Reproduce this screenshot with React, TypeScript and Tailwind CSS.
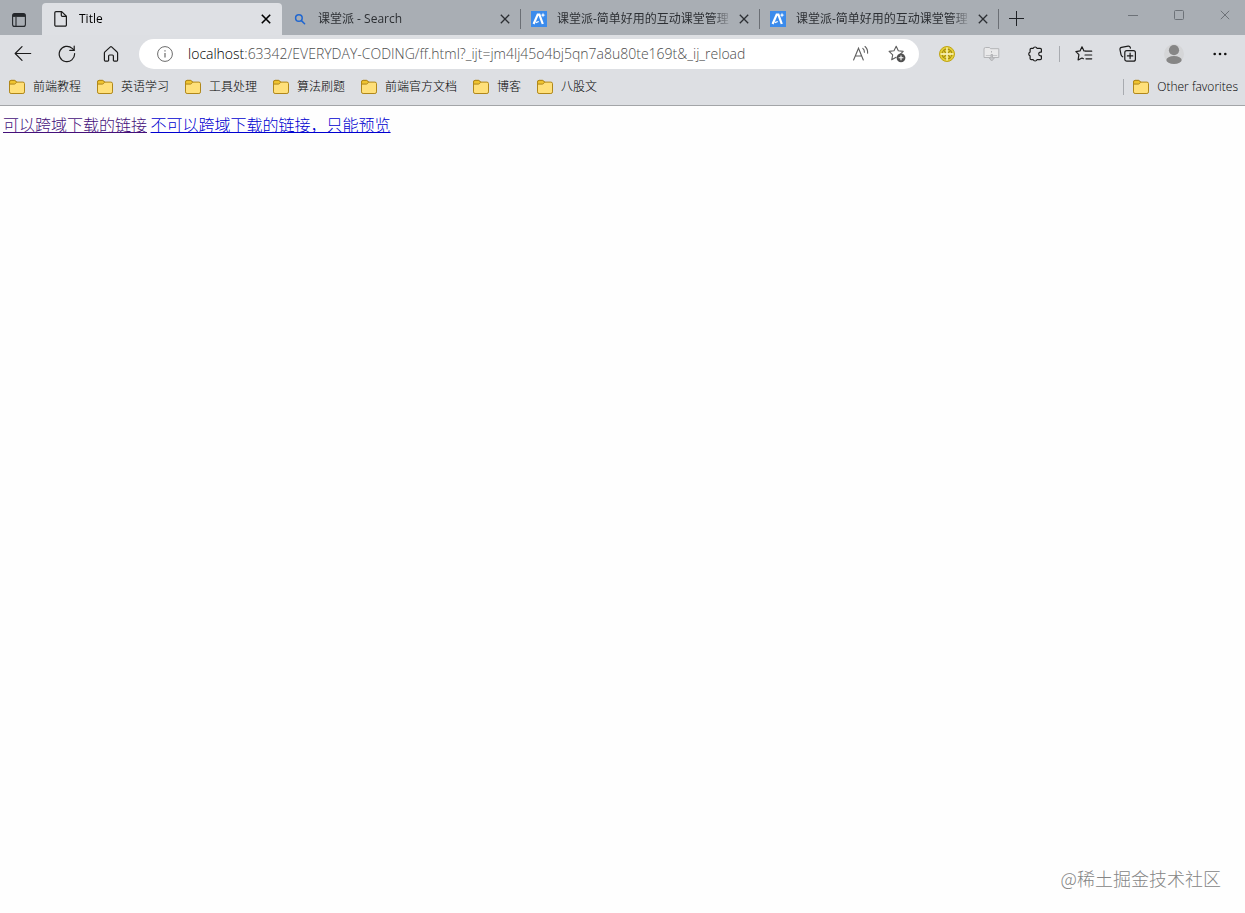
import { useState } from "react";
import type { ReactNode } from "react";
import clsx from "clsx";

type TabIcon = "page" | "search" | "ketangpai";

interface TabInfo {
  id: number;
  title: string;
  icon: TabIcon;
}

const TABS: TabInfo[] = [
  { id: 1, title: "Title", icon: "page" },
  { id: 2, title: "课堂派 - Search", icon: "search" },
  { id: 3, title: "课堂派-简单好用的互动课堂管理", icon: "ketangpai" },
  { id: 4, title: "课堂派-简单好用的互动课堂管理", icon: "ketangpai" },
];

const BOOKMARKS = ["前端教程", "英语学习", "工具处理", "算法刷题", "前端官方文档", "博客", "八股文"];

const URL_PATH = ":63342/EVERYDAY-CODING/ff.html?_ijt=jm4lj45o4bj5qn7a8u80te169t&_ij_reload";

function PageIcon() {
  return (
    <svg width="16" height="16" viewBox="0 0 16 16" fill="none" stroke="#1b1b1b" strokeWidth="1.2" strokeLinejoin="round">
      <path d="M3 .6h5.7l4.7 4.6v8.7a1.2 1.2 0 0 1-1.2 1.2H3a1.2 1.2 0 0 1-1.2-1.2V1.8A1.2 1.2 0 0 1 3 .6z" />
      <path d="M8.3.8v3.5a1.1 1.1 0 0 0 1.1 1.1h3.8" />
    </svg>
  );
}

function SearchIcon() {
  return (
    <svg width="16" height="16" viewBox="0 0 16 16" fill="none" stroke="#1f66d0" strokeWidth="1.5" strokeLinecap="round">
      <circle cx="6.9" cy="7" r="3.3" />
      <path d="M9.4 9.6l3.2 3.2" />
    </svg>
  );
}

function KetangpaiIcon() {
  return (
    <svg width="16" height="16" viewBox="0 0 16 16">
      <rect width="16" height="16" fill="#3b8bec" />
      <path d="M2.6 13L6.7 3.6h1.7L11.8 13" fill="none" stroke="#fff" strokeWidth="2.2" />
      <path d="M4.8 11.6l3-1.1" stroke="#fff" strokeWidth="1.2" />
      <path d="M12 1.6l.7 1.8 1.8.7-1.8.7-.7 1.8-.7-1.8-1.8-.7 1.8-.7z" fill="#fff" />
    </svg>
  );
}

function FolderIcon() {
  return (
    <svg className="shrink-0" width="16" height="16" viewBox="0 0 16 16" stroke="#b0871a" strokeLinejoin="round">
      <path d="M.5 3A1.6 1.6 0 0 1 2.1 1.4h3.3c.5 0 .8.2 1.1.5l1.1 1.2h6.3a1.6 1.6 0 0 1 1.6 1.6v8.2a1.6 1.6 0 0 1-1.6 1.6H2.1a1.6 1.6 0 0 1-1.6-1.6z" fill="#ffe07a" />
      <path d="M.6 5.1h4.8c.4 0 .7-.1 1-.4l1.2-1.5-1.1-1.3a1.4 1.4 0 0 0-1.1-.5H2.1A1.6 1.6 0 0 0 .5 3z" fill="#efc32f" />
    </svg>
  );
}

function CloseIcon({ strokeWidth = 1.3 }: { strokeWidth?: number }) {
  return (
    <svg width="10" height="10" viewBox="0 0 10 10" stroke="currentColor" strokeWidth={strokeWidth}>
      <path d="M.8.8l8.4 8.4M9.2.8L.8 9.2" />
    </svg>
  );
}

const TAB_ICONS: Record<TabIcon, ReactNode> = {
  page: <PageIcon />,
  search: <SearchIcon />,
  ketangpai: <KetangpaiIcon />,
};

interface TabProps {
  tab: TabInfo;
  active: boolean;
  onSelect: () => void;
}

function Tab({ tab, active, onSelect }: TabProps) {
  return (
    <div
      className={clsx(
        "flex min-w-0 items-center pr-[11px]",
        active ? "w-[240px] rounded-t bg-[#dee0e4] pl-[11px] text-black" : "w-[239px] pl-2.5 text-[#2c2f33]",
      )}
    >
      <button
        type="button"
        role="tab"
        aria-selected={active}
        onClick={onSelect}
        className="flex h-full min-w-0 flex-1 items-center gap-2.5 text-left"
      >
        <span className="shrink-0">{TAB_ICONS[tab.icon]}</span>
        <span className="w-44 whitespace-nowrap [mask-image:linear-gradient(to_right,black_88%,transparent)]">
          {tab.title}
        </span>
      </button>
      <button type="button" aria-label={`Close ${tab.title}`} className={active ? "text-black" : "text-[#2c2f33]"}>
        <CloseIcon strokeWidth={active ? 1.6 : 1.3} />
      </button>
    </div>
  );
}

function TabStrip() {
  const [current, setCurrent] = useState(1);

  return (
    <div className="flex h-[35px] bg-[#a9aeb4]">
      <button type="button" aria-label="Tab actions" className="flex w-[42px] items-center pt-1 pl-3">
        <svg width="14" height="14" viewBox="0 0 14 14" fill="none" stroke="#24272b" strokeWidth="1.1">
          <rect x=".6" y=".6" width="12.8" height="12.8" rx="2" />
          <path d="M1 2.4h12" strokeWidth="3" />
          <path d="M4 4v9.4" />
        </svg>
      </button>
      <div role="tablist" className="flex min-w-0 pt-[3px]">
        {TABS.map((tab, i) => (
          <div key={tab.id} className="relative flex min-w-0">
            <Tab tab={tab} active={tab.id === current} onSelect={() => setCurrent(tab.id)} />
            {i > 0 && <span className="absolute top-1.5 right-0 h-5 w-px bg-[#6b6f75]" />}
          </div>
        ))}
      </div>
      <button type="button" aria-label="New tab" className="flex w-[35px] items-center justify-center pt-0.5">
        <svg width="15" height="15" viewBox="0 0 15 15" stroke="#1f2226">
          <path d="M7.5 0v15M0 7.5h15" />
        </svg>
      </button>
      <div className="ml-auto flex h-[30px] text-[#6d7278]">
        <button type="button" aria-label="Minimize" className="flex w-[46px] items-center justify-center">
          <svg width="10" height="10" viewBox="0 0 10 10" stroke="currentColor">
            <path d="M0 5.5h10" />
          </svg>
        </button>
        <button type="button" aria-label="Maximize" className="flex w-[46px] items-center justify-center">
          <svg width="10" height="10" viewBox="0 0 10 10" fill="none" stroke="currentColor">
            <rect x=".5" y=".5" width="9" height="9" rx="1" />
          </svg>
        </button>
        <button type="button" aria-label="Close window" className="flex w-[43px] items-center justify-center pl-[3px]">
          <CloseIcon strokeWidth={1} />
        </button>
      </div>
    </div>
  );
}

function ToolButton({ label, children }: { label: string; children: ReactNode }) {
  return (
    <button type="button" aria-label={label} className="flex h-8 w-11 shrink-0 items-center justify-center">
      {children}
    </button>
  );
}

function AddressBar() {
  const [path, setPath] = useState(URL_PATH);

  return (
    <div className="mx-1.5 flex h-[30px] min-w-0 flex-1 items-center rounded-full bg-white pl-[18px] text-sm font-light">
      <svg className="mr-[15px] shrink-0" width="16" height="16" viewBox="0 0 16 16" fill="none" stroke="#6b6b6b">
        <circle cx="8" cy="8" r="7.4" />
        <path d="M8 7v4.6M8 4.2v1.4" strokeWidth="1.2" />
      </svg>
      <label htmlFor="address" className="text-black">localhost</label>
      <input
        id="address"
        type="text"
        aria-label="Address"
        value={path}
        onChange={(e) => setPath(e.target.value)}
        className="min-w-0 flex-1 bg-transparent text-[#4d4d4d] outline-none"
      />
      <button type="button" aria-label="Read aloud" className="flex h-7 w-9 items-center justify-center">
        <svg width="18" height="18" viewBox="0 0 18 18" fill="none" stroke="#5f5f5f" strokeWidth="1.1" strokeLinecap="round">
          <path d="M1.6 15L6.5 3.2 11.3 15M3.2 11h6.5" />
          <path d="M10.8 3.4c1.1.9 1.7 2.2 1.6 3.8M13 1.5c1.9 1.6 2.8 3.7 2.6 6.6" />
        </svg>
      </button>
      <button type="button" aria-label="Add this page to favorites" className="mr-1 flex h-7 w-9 items-center justify-center">
        <svg width="18" height="18" viewBox="0 0 18 18" fill="none">
          <path
            d="M8.2 1.3l2.1 4.5 4.9.6-3.6 3.4M8.2 1.3L6 5.8l-4.9.6 3.6 3.4-1 5 4.4-2.5"
            stroke="#5f5f5f"
            strokeWidth="1.1"
            strokeLinejoin="round"
            strokeLinecap="round"
          />
          <circle cx="13" cy="12.8" r="4.4" fill="#4f4f4f" />
          <path d="M13 10.4v4.8M10.6 12.8h4.8" stroke="#fff" strokeWidth="1.1" />
        </svg>
      </button>
    </div>
  );
}

function Toolbar() {
  return (
    <div className="flex items-center px-px py-[3px]">
      <ToolButton label="Back">
        <svg width="18" height="16" viewBox="0 0 18 16" fill="none" stroke="#1b1b1b" strokeWidth="1.2" strokeLinecap="round" strokeLinejoin="round">
          <path d="M1.2 7.5h15.5M8 .7L1.2 7.5 8 14.3" />
        </svg>
      </ToolButton>
      <ToolButton label="Refresh">
        <svg width="18" height="18" viewBox="0 0 18 18" fill="none" stroke="#1b1b1b" strokeWidth="1.2" strokeLinecap="round" strokeLinejoin="round">
          <path d="M16.6 8.6A7.7 7.7 0 1 1 14.2 3.4L16 5.2" />
          <path d="M16.2 1.2v4.2h-4.4" />
        </svg>
      </ToolButton>
      <ToolButton label="Home">
        <svg width="16" height="16" viewBox="0 0 16 16" fill="none" stroke="#1b1b1b" strokeWidth="1.2" strokeLinejoin="round">
          <path d="M1.4 6.9c0-.4.2-.7.5-1L7.4.9a.9.9 0 0 1 1.2 0L14.1 6c.3.2.5.6.5 1v7c0 .7-.4 1.1-1 1.1h-2.3a.9.9 0 0 1-.9-1V10a1 1 0 0 0-1-1H6.6a1 1 0 0 0-1 1v4.1a.9.9 0 0 1-.9 1H2.4c-.6 0-1-.4-1-1.1z" />
        </svg>
      </ToolButton>
      <AddressBar />
      <ToolButton label="Adblock extension">
        <svg width="16" height="16" viewBox="0 0 16 16" fill="none">
          <circle cx="8" cy="8" r="7.5" fill="#e3cf36" stroke="#c0a516" />
          <circle cx="8" cy="8" r="4.9" stroke="#a68c12" strokeWidth="1.2" strokeDasharray="2.6 1.2" />
          <path d="M4.2 4.2l7.6 7.6M11.8 4.2l-7.6 7.6" stroke="#a68c12" strokeWidth="1.2" />
          <path d="M8 1.6v12.8M1.6 8h12.8" stroke="#fbf6c8" strokeWidth="1.3" />
        </svg>
      </ToolButton>
      <ToolButton label="Download extension">
        <svg width="17" height="16" viewBox="0 0 17 16" fill="#e9e9ea" stroke="#b3b4b7">
          <path d="M2.5 1.5h4l1 1.2h8.3v8.8H1V3a1.5 1.5 0 0 1 1.5-1.5z" />
          <path d="M2.8 9.5h11.4" stroke="#c6c7ca" />
          <path d="M8.5 5v1.6M8 8.5h1.5v3.3h2L8.7 15 6 11.8h2z" fill="#c6c7ca" />
        </svg>
      </ToolButton>
      <ToolButton label="Extensions">
        <svg width="16" height="16" viewBox="0 0 16 16" fill="none" stroke="#1b1b1b" strokeWidth="1.2" strokeLinejoin="round">
          <path d="M6.2 2.4a2 2 0 0 1 3.8 0h3.2c.8 0 1.2.4 1.2 1.2v2.5h-.8a1.9 1.9 0 0 0 0 3.8h.8v2.5c0 .8-.4 1.2-1.2 1.2H10a2 2 0 0 1-3.8 0H4.3c-.8 0-1.2-.4-1.2-1.2V9.9a2 2 0 0 1 0-3.8V3.6c0-.8.4-1.2 1.2-1.2z" />
        </svg>
      </ToolButton>
      <span className="mx-0.5 h-4 w-px bg-[#a8abb0]" />
      <ToolButton label="Favorites">
        <svg width="18" height="16" viewBox="0 0 18 16" fill="none" stroke="#1b1b1b" strokeWidth="1.2" strokeLinecap="round" strokeLinejoin="round">
          <path d="M10.4 5L9 4.9 7 .8 5 4.9.9 5.6l3 3L3.1 14 7 12l1.4.7M10.5 5.2h6.2M10 9h6.7M11 12.8h5.7" />
        </svg>
      </ToolButton>
      <ToolButton label="Collections">
        <svg width="18" height="18" viewBox="0 0 18 18" fill="none" stroke="#1b1b1b" strokeWidth="1.2" strokeLinecap="round" strokeLinejoin="round">
          <rect x="5.8" y="5.6" width="10.6" height="10.6" rx="2" />
          <path d="M11.1 8.2v5.4M8.4 10.9h5.4" />
          <path d="M3.7 11.8A3 3 0 0 1 2 9.7L1 4.6a1.9 1.9 0 0 1 1.5-2.3l6.6-1.2a2 2 0 0 1 2.2 1.4l.1.6" />
        </svg>
      </ToolButton>
      <span className="ml-0.5">
        <ToolButton label="Profile">
          <svg width="20" height="20" viewBox="0 0 20 20">
            <circle cx="10" cy="10" r="10" fill="#d5d6d8" />
            <circle cx="10" cy="6.2" r="5.1" fill="#868686" />
            <ellipse cx="10" cy="16" rx="7.7" ry="4" fill="#868686" />
          </svg>
        </ToolButton>
      </span>
      <span className="mr-0.5 ml-0.5">
        <ToolButton label="Settings and more">
          <svg width="14" height="4" viewBox="0 0 14 4" fill="#111">
            <circle cx="1.7" cy="2" r="1.3" />
            <circle cx="7" cy="2" r="1.3" />
            <circle cx="12.3" cy="2" r="1.3" />
          </svg>
        </ToolButton>
      </span>
    </div>
  );
}

function BookmarkButton({ name }: { name: string }) {
  return (
    <button type="button" className="flex shrink-0 items-center gap-2 whitespace-nowrap text-black">
      <FolderIcon />
      {name}
    </button>
  );
}

function BookmarksBar() {
  return (
    <div className="flex h-8 items-center pr-[7px] pb-1 pl-[9px] font-light">
      <div className="flex gap-4">
        {BOOKMARKS.map((name) => (
          <BookmarkButton key={name} name={name} />
        ))}
      </div>
      <div className="ml-auto flex items-center gap-[9px]">
        <span className="h-4 w-px bg-[#a8abb0]" />
        <BookmarkButton name="Other favorites" />
      </div>
    </div>
  );
}

export default function App() {
  return (
    <div className="flex min-h-screen flex-col bg-[#fefefe] font-['Open_Sans','Noto_Sans_CJK_SC',sans-serif] text-xs">
      <header className="border-b border-[#a3a5a8] bg-[#dddfe3]">
        <TabStrip />
        <Toolbar />
        <BookmarksBar />
      </header>
      <main className="relative flex-1 px-[3px] pt-1.5 font-['Noto_Sans_CJK_SC',sans-serif] text-base leading-6 font-light">
        <a href="#download" className="text-[#44107a] underline">可以跨域下载的链接</a>{" "}
        <a href="#preview" className="text-[#0000d0] underline">不可以跨域下载的链接，只能预览</a>
        <span className="absolute right-6 bottom-[21px] text-lg text-[#858585]">@稀土掘金技术社区</span>
      </main>
    </div>
  );
}
